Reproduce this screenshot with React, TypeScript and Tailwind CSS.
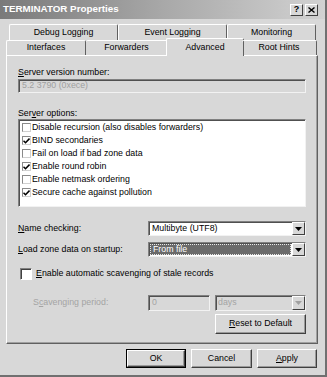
import type { ReactNode } from "react";

const font = { fontFamily: '"Liberation Sans", Arial, sans-serif' };

function U({ children }: { children: ReactNode }) {
  return <span className="underline underline-offset-1">{children}</span>;
}

function Arrow({ disabled = false }: { disabled?: boolean }) {
  return (
    <div className="flex h-full w-[13px] items-center justify-center border-t border-l border-b border-r border-t-white border-l-white border-b-[#404040] border-r-[#404040] bg-[#d8d8d8]">
      <svg width="7" height="4" viewBox="0 0 7 4">
        <path d="M0 0h7L3.5 4z" fill={disabled ? "#a0a0a0" : "#000"} />
      </svg>
    </div>
  );
}

function Field({ className, children }: { className?: string; children?: ReactNode }) {
  return (
    <div
      className={`flex items-center border-t border-l border-b border-r border-t-[#808080] border-l-[#808080] border-b-[#f2f2f2] border-r-[#f2f2f2] shadow-[inset_1px_1px_0_#505050] ${className ?? ""}`}
    >
      {children}
    </div>
  );
}

function Button({ children, width, isDefault = false }: { children: ReactNode; width: string; isDefault?: boolean }) {
  return (
    <div className={`${width} h-full ${isDefault ? "border border-black" : ""}`}>
      <div className="flex h-full items-center justify-center border-t border-l border-b border-r border-t-white border-l-white border-b-[#404040] border-r-[#404040] shadow-[inset_-1px_-1px_0_#9a9a9a]">
        {children}
      </div>
    </div>
  );
}

function SmallCheck({ checked }: { checked: boolean }) {
  return (
    <div className="flex h-[9px] w-[9px] items-center justify-center border-t border-l border-b border-r border-t-[#8a8a8a] border-l-[#8a8a8a] border-b-[#d0d0d0] border-r-[#d0d0d0] bg-white">
      {checked && (
        <svg width="7" height="6" viewBox="0 0 7 6">
          <path d="M0.5 2.8l2 2 4-4.2" stroke="#000" strokeWidth="1.5" fill="none" />
        </svg>
      )}
    </div>
  );
}

const options: [string, boolean][] = [
  ["Disable recursion (also disables forwarders)", false],
  ["BIND secondaries", true],
  ["Fail on load if bad zone data", false],
  ["Enable round robin", true],
  ["Enable netmask ordering", false],
  ["Secure cache against pollution", true],
];

export default function App() {
  return (
    <div
      style={font}
      className="h-[377px] w-[327px] overflow-hidden border-r-2 border-b-2 border-r-[#707070] border-b-[#707070] bg-[#d8d8d8] text-[8.8px] text-black"
    >
      {/* Title bar */}
      <div className="flex h-[19px] items-center justify-between bg-gradient-to-r from-[#7a7a7a] via-[#a8a8a8] to-[#d2d2d2] pl-[3px] pr-[7px]">
        <span className="text-[9.8px] font-bold text-white">TERMINATOR Properties</span>
        <div className="flex gap-[2px]">
          <div className="flex h-[12px] w-[13px] items-center justify-center border-t border-l border-b border-r border-t-white border-l-white border-b-[#404040] border-r-[#404040] bg-[#d8d8d8] text-[9px] font-bold">
            ?
          </div>
          <div className="flex h-[12px] w-[13px] items-center justify-center border-t border-l border-b border-r border-t-white border-l-white border-b-[#404040] border-r-[#404040] bg-[#d8d8d8]">
            <svg width="7" height="6" viewBox="0 0 7 6">
              <path d="M0.5 0.5l6 5M6.5 0.5l-6 5" stroke="#000" strokeWidth="1.4" />
            </svg>
          </div>
        </div>
      </div>

      {/* Tabs row 1 */}
      <div className="mt-[5px] ml-[9px] flex h-[16px]">
        {[
          ["Debug Logging", "w-[109px]"],
          ["Event Logging", "w-[109px]"],
          ["Monitoring", "w-[89px]"],
        ].map(([t, w]) => (
          <div
            key={t}
            className={`${w} flex items-center justify-center rounded-t-[2px] border-t border-l border-r border-t-white border-l-white border-r-[#606060]`}
          >
            {t}
          </div>
        ))}
      </div>

      {/* Tabs row 2 */}
      <div className="relative z-10 ml-[6px] flex h-[15px] items-end">
        <div className="flex h-[15px] w-[80px] items-center justify-center rounded-t-[2px] border-t border-l border-r border-t-white border-l-white border-r-[#606060]">
          Interfaces
        </div>
        <div className="flex h-[15px] w-[82px] items-center justify-center rounded-t-[2px] border-t border-r border-t-white border-r-[#606060]">
          Forwarders
        </div>
        <div className="-mx-[2px] -mb-[1px] flex h-[18px] w-[78px] items-start justify-center rounded-t-[2px] border-t border-l border-r border-t-white border-l-white border-r-[#606060] bg-[#d8d8d8] pt-[2px]">
          Advanced
        </div>
        <div className="flex h-[15px] w-[75px] items-center justify-center rounded-t-[2px] border-t border-r border-t-white border-r-[#606060]">
          Root Hints
        </div>
      </div>

      {/* Panel */}
      <div className="ml-[6px] flex h-[289px] w-[312px] flex-col border-t border-l border-b border-r border-t-white border-l-white border-b-[#606060] border-r-[#606060] px-[11px] shadow-[inset_-1px_-1px_0_#a0a0a0]">
        <div className="mt-[10px] h-[12px] leading-[12px]">
          <U>S</U>erver version number:
        </div>
        <Field className="mt-[1px] h-[14px] pl-[3px] text-[#a0a0a0]">5.2 3790 (0xece)</Field>

        <div className="mt-[14px] h-[12px] leading-[12px]">
          Ser<U>v</U>er options:
        </div>
        <Field className="h-[88px] flex-col items-stretch bg-white pt-[1px] pl-[3px]">
          {options.map(([t, c]) => (
            <div key={t} className="flex h-[13px] items-center">
              <SmallCheck checked={c} />
              <span className="ml-[1px]">{t}</span>
            </div>
          ))}
        </Field>

        <div className="mt-[14px] flex h-[15px] items-center">
          <div className="w-[130px]">
            <U>N</U>ame checking:
          </div>
          <Field className="h-full flex-1 justify-between bg-white">
            <span className="pl-[3px]">Multibyte (UTF8)</span>
            <Arrow />
          </Field>
        </div>

        <div className="mt-[6px] flex h-[15px] items-center">
          <div className="w-[130px]">
            <U>L</U>oad zone data on startup:
          </div>
          <Field className="h-full flex-1 justify-between bg-white">
            <div className="mx-[1px] flex h-[11px] flex-1 items-center border border-dotted border-[#e8e8e8] bg-[#6a6a6a] pl-[2px] text-white">
              From file
            </div>
            <Arrow />
          </Field>
        </div>

        <div className="mt-[10px] flex h-[14px] items-center">
          <div className="ml-[2px] h-[12px] w-[12px] border-t border-l border-b border-r border-t-[#808080] border-l-[#808080] border-b-white border-r-white bg-white shadow-[inset_1px_1px_0_#404040]" />
          <span className="ml-[4px]">
            <U>E</U>nable automatic scavenging of stale records
          </span>
        </div>

        <div className="mt-[14px] flex h-[16px] items-center">
          <div className="w-[130px] pl-[15px] text-[#a4a4a4]">
            S<U>c</U>avenging period:
          </div>
          <Field className="h-full w-[62px] pl-[3px] text-[#a4a4a4]">0</Field>
          <Field className="ml-[5px] h-full flex-1 justify-between text-[#a4a4a4]">
            <span className="pl-[2px]">days</span>
            <Arrow disabled />
          </Field>
        </div>

        <div className="mt-[3px] flex h-[20px] justify-end">
          <Button width="w-[91px]">
            <U>R</U>eset to Default
          </Button>
        </div>
      </div>

      {/* Dialog buttons */}
      <div className="mt-[5px] mr-[8px] flex h-[19px] justify-end gap-[5px]">
        <Button width="w-[60px]" isDefault>
          OK
        </Button>
        <Button width="w-[61px]">Cancel</Button>
        <Button width="w-[60px]">
          <U>A</U>pply
        </Button>
      </div>
    </div>
  );
}
